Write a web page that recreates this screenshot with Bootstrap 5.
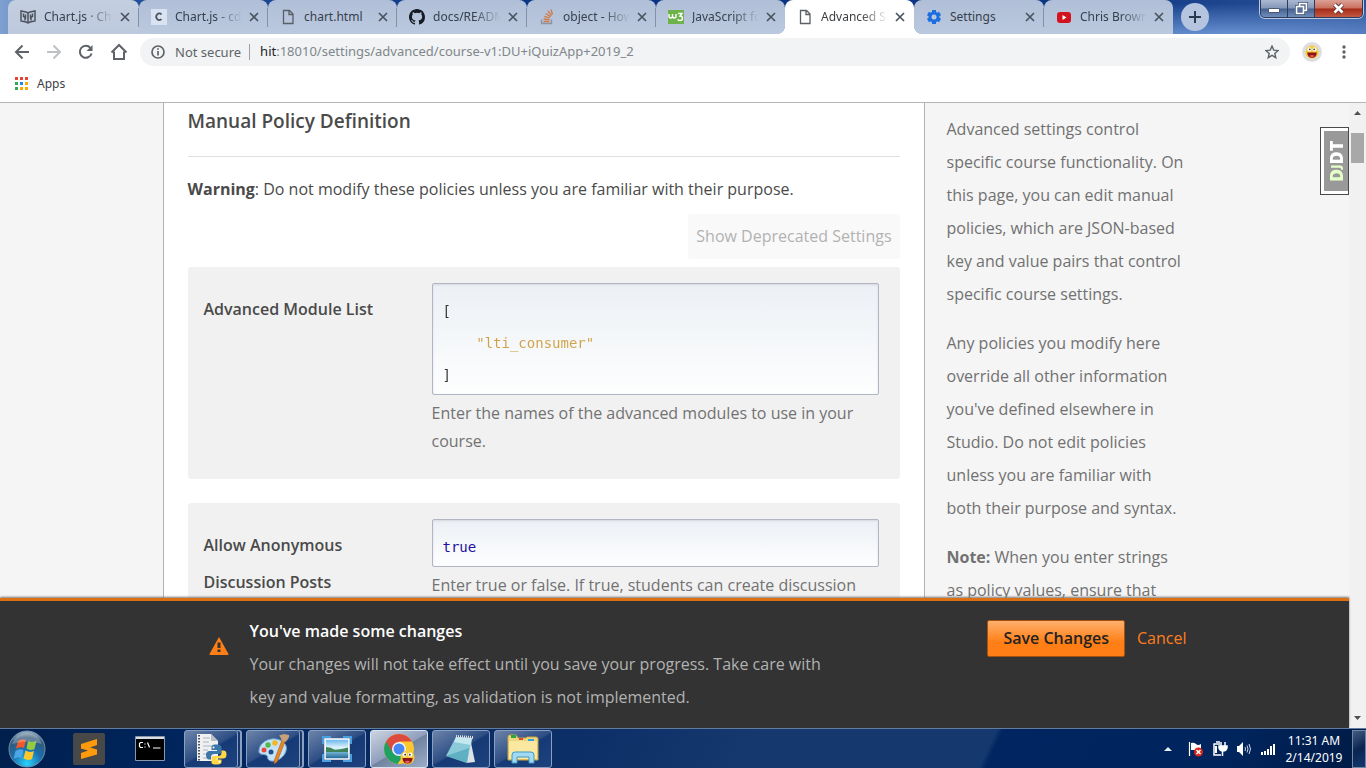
<!DOCTYPE html>
<html lang="en">
<head>
<meta charset="utf-8">
<meta name="viewport" content="width=device-width, initial-scale=1">
<title>Advanced Settings</title>
<link href="https://cdn.jsdelivr.net/npm/bootstrap@5.3.0/dist/css/bootstrap.min.css" rel="stylesheet">
<style>
body{font-family:"Open Sans",sans-serif;font-size:16px;color:#4a4a4a;background:#fff}
svg{display:block;flex:none}
button{font-family:inherit}
.plain{border:0;background:none;padding:0;color:inherit}
/* browser chrome */
.chrome-ui{font-family:"Noto Sans","Open Sans",sans-serif;font-size:12px}
.strip{height:34px;padding:0 3px 0 8px;background:radial-gradient(ellipse 380px 34px at 90% 110%,#6f98d8,transparent),linear-gradient(90deg,#7fa0d0 0,#23529c 8%,#0a3384 40%,#0a3380 75%,#123c86 82%,#2b5299 100%)}
.btab{flex:0 1 129px;min-width:0;height:34px;padding:0 9px 0 12px;background:linear-gradient(#b0bfd7,#bbc9df);border-radius:8px 8px 0 0;color:#37404d;position:relative}
.btab:nth-child(4n){flex-basis:130px}
.btab:first-child{background:linear-gradient(#c3cedf,#bdc9dd);flex-basis:131px}
.btab.sep::after{content:"";position:absolute;right:0;top:8px;width:1px;height:19px;background:#8390a6}
.btab.current{background:#fff;color:#3c4043;z-index:1}
.btab.current::before,.btab.current::after{content:"";position:absolute;bottom:0;width:8px;height:8px}
.btab.current::before{left:-8px;background:radial-gradient(circle at 0 0,transparent 8px,#fff 8px)}
.btab.current::after{right:-8px;background:radial-gradient(circle at 100% 0,transparent 8px,#fff 8px)}
.btab .name{white-space:nowrap;overflow:hidden;margin:0 7px 0 8px;-webkit-mask-image:linear-gradient(90deg,#000 60%,transparent);mask-image:linear-gradient(90deg,#000 60%,transparent)}
.btab .name.whole{-webkit-mask-image:none;mask-image:none}
.newtab{width:28px;height:28px;border-radius:50%;background:#b6c5df;margin:3px 0 0 8px}
.winctl{height:18px;border:1px solid #2b3c5c;border-top:0;border-radius:0 0 5px 5px;box-shadow:0 0 0 1px #b9c8e0;overflow:hidden}
.winctl button{width:27px;background:linear-gradient(#aab9d2,#8496b8 48%,#45608f 52%,#6f8dbb);border-right:1px solid #2b3c5c}
.winctl .shut{width:47px;border:0;background:linear-gradient(#dda096,#c8705f 48%,#a52a17 52%,#c35a43)}
.toolbar{height:36px;padding:0 14px;color:#5f6368}
.omni{height:28px;border-radius:14px;background:#f1f3f4;font-size:13px;padding:0 11px;margin:0 12px;gap:10px}
.omni .secure{padding-right:8px;border-right:1px solid #9aa0a6;line-height:16px}
.omni .addr{color:#80868b}
.profile{padding:3px;margin-right:14px;background:#dedede}
.marks{height:33px;padding:0 14px 5px;border-bottom:1px solid #b6b4b6;color:#3c4043}
/* page */
.viewport{background:#f5f5f5;min-height:0}
.scroller{min-height:0}
.wrap{max-width:1024px}
.sheet{background:#fff;border:solid #b2b2b2;border-width:0 1px;padding:0 24px}
.sheet h3{font-size:19px;line-height:36px;font-weight:600;border-bottom:1px solid #e0e0e0;margin:0 0 16px;padding-bottom:17px}
.warn{line-height:33px;margin:0 0 8px}
.dep{background:#f9f9f9;color:#b2b2b2;height:45px;padding:0 8px 2px;border-radius:2px}
.policy{background:#f1f1f1;border-radius:3px;padding:16px 21px 24px 16px;margin-bottom:24px}
.policy label{font-weight:600;line-height:37px;padding-top:8px;padding-right:16px;flex:0 0 228px}
.code{display:block;width:100%;border:1px solid #b2b6c4;border-radius:2px;padding:11px 10px 3px;font:14px/32px "DejaVu Sans Mono",monospace;resize:none;overflow:hidden;outline:0;box-shadow:inset 0 1px 2px #d6dadf;background:linear-gradient(#ecf0f5,#fdfefe);color:#2211a0}
.code.one{height:48px}
.code.list{height:112px;color:transparent;background:linear-gradient(#333 43px,#d0a145 43px,#d0a145 75px,#333 75px) text,linear-gradient(#ecf0f5,#fdfefe) padding-box}
.help{color:#727272;line-height:28px;padding-top:4px;margin:0}
.info{flex:0 0 262px;padding:10px 0 0 22px;line-height:33px;color:#717171}
.info p{margin:0 0 16px}
.djdt{position:absolute;right:0;top:24px;z-index:2;background:#fff;border:1px solid #4a4a4a;padding:3px 0 3px 3px;text-decoration:none}
.djdt span{display:block;writing-mode:vertical-rl;transform:rotate(180deg);background:#999;color:#fff;font-weight:800;font-size:18px;line-height:24px;height:60px;text-align:center}
.djdt i{font-style:normal;color:#e4ffc8}
.djdt small{font-size:12px}
.notice{background:#333;border-top:3px solid #dd7013;box-shadow:0 -1px 2px #777;position:relative;color:#b2b2b2;line-height:33px}
.notice .wrap{padding:14px 0 14px 46px}
.notice .alerticon{margin-top:22px}
.notice .msg{max-width:590px;margin-left:21px}
.notice h2{font-size:16px;line-height:33px;font-weight:600;color:#fff;margin:0}
.save{height:37px;border:1px solid #a3530f;border-radius:2px;background:linear-gradient(#ffb06e,#ff7f16 60%);color:#222;padding:0 15px;font-weight:600;margin-top:5px}
.cancel{color:#fd7e20;text-decoration:none;margin:5px 0 0 12px;line-height:37px}
.sbar{width:17px;background:#f1f1f1;padding:7px 2px}
.thumb{height:30px;background:#a8a8a8;margin-top:18px}
/* taskbar */
.task{height:40px;background:linear-gradient(115deg,#001f4c 0,#00245c 12%,#0b2f66 42%,#15396f 55%,#15396f 72%,#002560 72.5%,#00245c 90%,#001a44 100%);border-top:1px solid #627da2;font-family:"Noto Sans","Open Sans",sans-serif;font-size:12px;color:#fff;padding-left:8px}
.start{margin-right:27px}
.cmd{margin:0 19px 0 30px}
.tb{width:58px;height:38px;border:1px solid #8ba0c0;border-radius:3px;background:linear-gradient(150deg,#6d84aa,#2e4f85 48%,#163a75 52%,#1d427d);margin-right:4px}
.tb.multi{width:54px;margin-right:8px;box-shadow:3px 0 0 -1px #17376c,4px 0 0 0 #8ba0c0}
.tb.on{background:linear-gradient(150deg,#ccd4e2,#8f9fbd 50%,#71849f 52%,#9cacc8);border-color:#dbe3ee}
.clock{line-height:17px;text-align:center;width:76px}
.desk{width:14px;height:38px;border:1px solid #7186a5;background:linear-gradient(150deg,#425c82,#0a2550 50%,#13396f)}
</style>
</head>
<body class="vh-100 d-flex flex-column overflow-hidden">
<svg width="0" height="0" class="position-absolute" aria-hidden="true">
<defs>
<symbol id="x" viewBox="0 0 10 10"><path d="M1 1l8 8M9 1L1 9" stroke="#4b5361" stroke-width="1.7"/></symbol>
<symbol id="doc" viewBox="0 0 16 16"><path d="M3.5 1.5h6l3.500 3.500v9.500h-9.500zM9 1.500v4h4" fill="none" stroke="#5a5e65" stroke-width="1.3"/></symbol>
<symbol id="awe" viewBox="0 0 16 16"><circle cx="8" cy="8" r="7.500" fill="#f5cb3c"/><circle cx="5" cy="5" r="2.300" fill="#fff"/><circle cx="11" cy="5" r="2.300" fill="#fff"/><circle cx="5.500" cy="5" r=".9" fill="#222"/><circle cx="10.500" cy="5" r=".9" fill="#222"/><path d="M2.500 8.500h11q-.5 6-5.500 6t-5.500-6z" fill="#8c1515"/><path d="M5 12.500q3-2 6 0-3 2.500-6 0z" fill="#f05a6a"/></symbol>
</defs>
</svg>
<header class="chrome-ui flex-shrink-0">
<div class="strip d-flex">
<div class="btab sep d-flex align-items-center"><svg width="16" height="16" viewBox="0 0 16 16" fill="none" stroke="#4c535e" stroke-width="1.500"><path d="M1 2l5 1 2 1 2-1 5-1v10l-5 1-2 1-2-1-5-1zM8 4v10M3.500 4.500v3l2 1v-3M5 8.500v3M12.500 4.500v3l-2 1v-3M11 8.500v3"/></svg><span class="name flex-fill">Chart.js · Chart</span><button class="plain" aria-label="Close tab"><svg width="10" height="10"><use href="#x"/></svg></button></div>
<div class="btab sep d-flex align-items-center"><svg width="16" height="16" viewBox="0 0 16 16"><path fill="#d8e2f0" d="M0 0h16v16H0z"/><path d="M10.500 5.500A3 3.300 0 1 0 10.500 10" fill="none" stroke="#4c535e" stroke-width="1.700"/></svg><span class="name flex-fill">Chart.js - cdnjs</span><button class="plain" aria-label="Close tab"><svg width="10" height="10"><use href="#x"/></svg></button></div>
<div class="btab sep d-flex align-items-center"><svg width="16" height="16"><use href="#doc"/></svg><span class="name whole flex-fill">chart.html</span><button class="plain" aria-label="Close tab"><svg width="10" height="10"><use href="#x"/></svg></button></div>
<div class="btab sep d-flex align-items-center"><svg width="16" height="16" viewBox="0 0 16 16"><path fill="#161b26" d="M8 0C3.580 0 0 3.580 0 8c0 3.540 2.290 6.530 5.470 7.590.4.070.55-.17.55-.38v-1.490c-2.010.37-2.530-.49-2.690-.94-.09-.23-.48-.94-.82-1.130-.28-.15-.68-.52-.01-.53.63-.01 1.080.58 1.230.82.72 1.210 1.870.87 2.330.66.070-.52.28-.87.510-1.070-1.780-.2-3.640-.89-3.640-3.950 0-.87.31-1.590.82-2.150-.08-.2-.36-1.020.08-2.120 0 0 .67-.21 2.200.82a7.600 7.600 0 0 1 4 0c1.530-1.040 2.200-.82 2.200-.82.44 1.100.16 1.920.08 2.120.51.56.82 1.270.82 2.150 0 3.070-1.870 3.750-3.650 3.950.29.25.54.73.54 1.480v2.200c0 .21.15.46.55.38A8 8 0 0 0 16 8c0-4.420-3.580-8-8-8z"/></svg><span class="name flex-fill">docs/README</span><button class="plain" aria-label="Close tab"><svg width="10" height="10"><use href="#x"/></svg></button></div>
<div class="btab sep d-flex align-items-center"><svg width="16" height="16" viewBox="0 0 16 16" fill="none"><path d="M2.500 10.500v4h10v-4" stroke="#8c93a0" stroke-width="1.400"/><path d="M4.500 12.500h6M4.600 10l6 .7M5.200 7.300l5.700 1.700M6.700 4.500l5 3.300M9 2l3.500 4.700M12 .5l1.500 5" stroke="#d07845" stroke-width="1.300"/></svg><span class="name flex-fill">object - How to</span><button class="plain" aria-label="Close tab"><svg width="10" height="10"><use href="#x"/></svg></button></div>
<div class="btab d-flex align-items-center"><svg width="16" height="16" viewBox="0 0 16 16"><path fill="#6db34a" d="M0 1h16v14H0z"/><path d="M1 5v2q0 2 1.700 2t1.800-2V5v2q0 2 1.800 2T8 7V5M10 4.500h4L12 7q2.500 0 2.500 2.200T12 11.500q-1.500 0-2.500-1" fill="none" stroke="#fff" stroke-width="1.400"/></svg><span class="name flex-fill">JavaScript for</span><button class="plain" aria-label="Close tab"><svg width="10" height="10"><use href="#x"/></svg></button></div>
<div class="btab current d-flex align-items-center"><svg width="16" height="16"><use href="#doc"/></svg><span class="name flex-fill">Advanced Settings</span><button class="plain" aria-label="Close tab"><svg width="10" height="10"><use href="#x"/></svg></button></div>
<div class="btab sep d-flex align-items-center"><svg width="16" height="16" viewBox="0 0 16 16"><g fill="#1d6fe0"><circle cx="8" cy="8" r="5.500"/><path d="M6 1h4v14H6z"/><path d="M6 1h4v14H6z" transform="rotate(60 8 8)"/><path d="M6 1h4v14H6z" transform="rotate(120 8 8)"/></g><circle cx="8" cy="8" r="2.500" fill="#b8c6dc"/></svg><span class="name whole flex-fill">Settings</span><button class="plain" aria-label="Close tab"><svg width="10" height="10"><use href="#x"/></svg></button></div>
<div class="btab d-flex align-items-center"><svg width="16" height="16" viewBox="0 0 16 16"><rect x="1" y="3" width="14" height="11" rx="3" fill="#d3121d"/><path d="M6.500 6v5l4-2.500z" fill="#fff"/></svg><span class="name flex-fill">Chris Brown</span><button class="plain" aria-label="Close tab"><svg width="10" height="10"><use href="#x"/></svg></button></div>
<button class="plain newtab d-flex align-items-center justify-content-center flex-shrink-0" aria-label="New tab"><svg width="12" height="12"><path d="M6 0v12M0 6h12" stroke="#2d3a4d" stroke-width="2"/></svg></button>
<div class="winctl d-flex ms-auto flex-shrink-0">
<button class="plain d-flex align-items-center justify-content-center" aria-label="Minimize"><svg width="12" height="8"><path d="M.5 3.500h11v4H.5z" fill="#fff" stroke="#4c5a72"/></svg></button>
<button class="plain d-flex align-items-center justify-content-center" aria-label="Restore"><svg width="13" height="13"><path d="M4.500 1.500h7v7h-7zM1.500 4.500h7v7h-7z" fill="none" stroke="#3c4a66" stroke-width="3"/><path d="M4.500 1.500h7v7h-3v3h-7v-7h3z" fill="#5a7098" stroke="#fff" stroke-width="1.600"/><path d="M4.500 4.500h4v4" fill="none" stroke="#fff" stroke-width="1.500"/></svg></button>
<button class="plain shut d-flex align-items-center justify-content-center" aria-label="Close"><svg width="13" height="11"><path d="M2.500 1.500l8 8M10.500 1.500l-8 8" stroke="#63312f" stroke-width="4.500"/><path d="M2.500 1.500l8 8M10.500 1.500l-8 8" stroke="#fff" stroke-width="2.700"/></svg></button>
</div>
</div>
<div class="toolbar d-flex align-items-center">
<button class="plain" aria-label="Back"><svg width="16" height="16" fill="none" stroke="#5f6368" stroke-width="2"><path d="M15 8H2M8.500 1.500L2 8l6.500 6.500"/></svg></button>
<button class="plain ms-3" aria-label="Forward"><svg width="16" height="16" fill="none" stroke="#bdc1c6" stroke-width="2"><path d="M1 8h13M7.500 1.500L14 8l-6.500 6.500"/></svg></button>
<button class="plain ms-3" aria-label="Reload"><svg width="16" height="16" fill="none"><path d="M13.600 9.500a6 6 0 1 1-1.200-5.700" stroke="#5f6368" stroke-width="2"/><path d="M14.500 1v6h-6z" fill="#5f6368"/></svg></button>
<button class="plain ms-3" aria-label="Home"><svg width="18" height="18" viewBox="0 0 18 18" fill="none" stroke="#5f6368" stroke-width="2"><path d="M1.500 9.500L9 2l7.500 7.500M4 8.500V16h10V8.500"/></svg></button>
<div class="omni d-flex align-items-center flex-fill">
<svg width="14" height="14" fill="none" stroke="#5f6368" stroke-width="1.700"><circle cx="7" cy="7" r="6"/><path d="M7 6v4.500M7 3.300v1.500"/></svg>
<span class="secure">Not secure</span>
<div class="addr flex-fill"><span class="text-dark">hit</span>:18010/settings/advanced/course-v1:DU+iQuizApp+2019_2</div>
<button class="plain" aria-label="Bookmark"><svg width="14" height="14" viewBox="0 0 14 14"><path d="M7 1l1.700 4.100 4.400.4-3.300 2.900 1 4.300L7 10.400l-3.800 2.300 1-4.300L.9 5.500l4.400-.4z" fill="none" stroke="#5f6368" stroke-width="1.400"/></svg></button>
</div>
<button class="plain profile rounded-circle" aria-label="Profile"><svg width="14" height="14"><use href="#awe"/></svg></button>
<button class="plain mx-1" aria-label="Menu"><svg width="8" height="14" fill="#5f6368"><circle cx="4" cy="2" r="1.700"/><circle cx="4" cy="7" r="1.700"/><circle cx="4" cy="12" r="1.700"/></svg></button>
</div>
<div class="marks d-flex align-items-center">
<a href="#" class="d-flex align-items-center text-reset text-decoration-none"><svg width="15" height="15"><path d="M1 1h3v3H1zM6 1h3v3H6zM11 1h3v3h-3z" fill="#ea4335"/><path d="M1 6h3v3H1zM1 11h3v3H1z" fill="#34a853"/><path d="M6 6h3v3H6z" fill="#1a86f0"/><path d="M11 6h3v3h-3zM6 11h3v3H6zM11 11h3v3h-3z" fill="#f9ab00"/></svg><span class="ms-2">Apps</span></a>
</div>
</header>
<div class="viewport d-flex flex-fill">
<div class="d-flex flex-column flex-fill position-relative">
<div class="scroller flex-fill overflow-hidden">
<div class="wrap mx-auto d-flex h-100">
<main class="sheet flex-fill">
<h3>Manual Policy Definition</h3>
<p class="warn"><strong>Warning</strong>: Do not modify these policies unless you are familiar with their purpose.</p>
<div class="d-flex justify-content-end mb-2"><button class="plain dep">Show Deprecated Settings</button></div>
<div class="policy d-flex">
<label for="modules">Advanced Module List</label>
<div class="flex-fill"><textarea id="modules" class="code list" spellcheck="false">[
    "lti_consumer"
]</textarea><p class="help">Enter the names of the advanced modules to use in your course.</p></div>
</div>
<div class="policy d-flex">
<label for="anon">Allow Anonymous Discussion Posts</label>
<div class="flex-fill"><input id="anon" class="code one" value="true"><p class="help">Enter true or false. If true, students can create discussion</p></div>
</div>
</main>
<aside class="info">
<p>Advanced settings control specific course functionality. On this page, you can edit manual policies, which are JSON-based key and value pairs that control specific course settings.</p>
<p>Any policies you modify here override all other information you've defined elsewhere in Studio. Do not edit policies unless you are familiar with both their purpose and syntax.</p>
<p><strong>Note:</strong> When you enter strings as policy values, ensure that</p>
</aside>
</div>
</div>
<a href="#" class="djdt"><span><i>D<small>J</small></i>DT</span></a>
<section class="notice flex-shrink-0">
<div class="wrap mx-auto d-flex align-items-start">
<svg width="20" height="18" viewBox="0 0 20 18" class="alerticon"><path d="M10 0l9.500 17q.3 1-.8 1H1.300Q.2 18 .5 17z" fill="#ff7f16"/><path d="M8.500 5.500h3v5.500h-3zM8.500 12.500h3v2.500h-3z" fill="#333"/></svg>
<div class="msg"><h2>You've made some changes</h2><p class="m-0">Your changes will not take effect until you save your progress. Take care with key and value formatting, as validation is not implemented.</p></div>
<button class="save ms-auto">Save Changes</button><a href="#" class="cancel">Cancel</a>
</div>
</section>
</div>
<div class="sbar d-flex flex-column flex-shrink-0">
<svg class="mx-auto" width="9" height="5"><path d="M1 5l3.500-4L8 5z" fill="#505050"/></svg>
<div class="thumb"></div>
<svg class="mx-auto mt-auto" width="9" height="5"><path d="M1 0l3.500 4L8 0z" fill="#505050"/></svg>
</div>
</div>
<footer class="task d-flex align-items-center flex-shrink-0">
<button class="plain start" aria-label="Start"><svg width="38" height="38" viewBox="0 0 38 38"><defs><radialGradient id="orb" cx=".5" cy=".9" r=".9"><stop offset="0" stop-color="#28d3fa"/><stop offset=".45" stop-color="#1a6fae"/><stop offset=".8" stop-color="#345877"/><stop offset="1" stop-color="#a6bccb"/></radialGradient></defs><circle cx="19" cy="19" r="18" fill="url(#orb)" stroke="#6d8fae"/><path d="M10 11q4-3 8-1l-2 8q-4-2-8 1z" fill="#f0582a"/><path d="M20 11q4 2 8.500 0l-2 8q-4 2-8-.5z" fill="#95cb3e"/><path d="M7.500 21q4-3 8-1l-2 8q-4-2-8 1z" fill="#4ba6e6"/><path d="M17.500 20.500q4 2.500 8.500.5l-2 8q-4 2-8.500-.5z" fill="#fdc72e"/><path d="M4 14Q8 3 19 3t15 11q-14-5-30 0z" fill="#fff" opacity=".25"/></svg></button>
<button class="plain" aria-label="Sublime Text"><svg width="32" height="32" viewBox="0 0 32 32"><rect width="32" height="32" rx="2" fill="#484848"/><path d="M8 11l16-5v6l-7 2.500 7 2v5L8 26v-6l7-2.500-7-2z" fill="#ff9a0c"/></svg></button>
<button class="plain cmd" aria-label="Command Prompt"><svg width="30" height="25" viewBox="0 0 30 25"><path d="M.5.5h29v24H.5z" fill="#000" stroke="#8a97a8"/><path d="M1 1h28v2H1z" fill="#d9dee6"/><path d="M8 6.500H5.500L4.500 7.500v3l1 1H8M10 7.500v1M10 10.500v1M12.500 6.500l2 5M18 12h7.500" stroke="#fff" stroke-width="1.200" fill="none"/></svg></button>
<button class="plain tb multi d-flex align-items-center justify-content-center" aria-label="Python file"><svg width="32" height="32" viewBox="0 0 32 32"><path d="M2 1h14l7 7v20H2z" fill="#eef0f2"/><path d="M16 1l7 7h-7z" fill="#b9bec5"/><path d="M4 2v26" stroke="#555" stroke-width="2" stroke-dasharray="1.500 1.500"/><path d="M8 5h7M8 9h6M8 13h11M8 17h5M8 21h4M8 25h4" stroke="#b0b4ba"/><path d="M21 11.500c-4 0-4.500 1.500-4.500 3V17H22v1h-7.500c-2 0-3.500 1.500-3.500 4s1.300 4.500 3 4.500h2v-2.500c0-2 1.500-3 3-3h5c1.500 0 2.500-1.200 2.500-2.500v-4c0-2-1.500-3-5.500-3z" fill="#3a76a8"/><path d="M22 31.500c4 0 4.500-1.500 4.500-3V26.500H21v-1h7c2.500 0 3.500-1.500 3.500-4s-1-4-3-4h-2v2.500c0 2-1.500 3-3 3h-4.500c-1.500 0-2.500 1-2.500 2.500v3.500c0 2 1.500 2.500 5.500 2.500z" fill="#ffd845"/><circle cx="18.500" cy="14.500" r="1" fill="#fff"/><circle cx="24.500" cy="28.800" r="1" fill="#fff"/></svg></button>
<button class="plain tb multi d-flex align-items-center justify-content-center" aria-label="Paint"><svg width="34" height="32" viewBox="0 0 34 32"><path d="M3 17C4 9 13 5 20 6s12 6 10 12-8 11-15 10c-5-1-2-5-5-6S2 22 3 17z" fill="#c4e3f7" stroke="#6aa2cf"/><circle cx="8" cy="17" r="2.500" fill="#e84a39"/><circle cx="12" cy="12" r="2.700" fill="#54b848"/><circle cx="19" cy="10" r="2.800" fill="#f4b72a"/><circle cx="15" cy="19" r="2.500" fill="#1f4f8c"/><path d="M26 7l3 1.500-8 20.500-3 2 .5-4z" fill="#e88726" stroke="#a85613" stroke-width=".6"/><path d="M25.500 7.500q-.5-3-2.500-5l5-1.500 5 1q1 2-3.500 7z" fill="#c7a07a"/></svg></button>
<button class="plain tb d-flex align-items-center justify-content-center" aria-label="Picture viewer"><svg width="30" height="26" viewBox="0 0 30 26"><defs><linearGradient id="sky" x2="0" y2="1"><stop offset="0" stop-color="#62b2ec"/><stop offset=".45" stop-color="#e4f6fb"/><stop offset=".6" stop-color="#7fc0de"/><stop offset="1" stop-color="#1d5f90"/></linearGradient></defs><path d="M1 8V1h8M21 1h8v7M29 18v7h-8M9 25H1v-7" fill="none" stroke="#4a9fe0" stroke-width="2"/><path d="M3 3h24v20H3z" fill="url(#sky)" stroke="#fff" stroke-width="1.500"/><path d="M4 11q5 0 9 3 7-1 13-2.500V16H4z" fill="#3f8258"/></svg></button>
<button class="plain tb on d-flex align-items-center justify-content-center" aria-label="Chrome"><svg width="32" height="32" viewBox="0 0 32 32"><circle cx="16" cy="16" r="15" fill="#fcc72f"/><path d="M3 8.500a15 15 0 0 0 11.500 22.400L22 20l-6-4z" fill="#1ea163"/><path d="M16 8.500h13A15 15 0 0 0 3 8.500l6 10z" fill="#dd4b3e"/><circle cx="16" cy="16" r="7" fill="#f4f6f8"/><circle cx="16" cy="16" r="5.500" fill="#4788f4"/><svg x="17" y="17" width="15" height="15"><use href="#awe"/></svg></svg></button>
<button class="plain tb d-flex align-items-center justify-content-center" aria-label="Notepad"><svg width="32" height="30" viewBox="0 0 32 30"><path d="M25 4l5 24-9 1z" fill="#dce3e6"/><path d="M11 3l16 1-5 25L1 22z" fill="#8bcbd9"/><path d="M11 3l16 1-1 7-17-3z" fill="#c3e8ee"/><path d="M1 22l23-8-2 15z" fill="#459fb5" opacity=".6"/><path d="M11 2.500l17 1" stroke="#ddd" stroke-width="3" stroke-dasharray="1 1"/></svg></button>
<button class="plain tb d-flex align-items-center justify-content-center" aria-label="Explorer"><svg width="34" height="32" viewBox="0 0 34 32"><path d="M2 27V4q0-2 2-2h6l2 3h8l1-1h9q2 0 2 2v21z" fill="#efd77d" stroke="#c8a545"/><path d="M3 8h28v18H3z" fill="#fae7a0"/><path d="M5 2h5v3H5z" fill="#27a844"/><path d="M13 5h4v2h-4z" fill="#df4b35"/><path d="M22 6h6v2h-6z" fill="#36a3df"/><path d="M6 30V22q0-3 3-3h16q3 0 3 3v8h-5v-6H11v6z" fill="#a3daf2" stroke="#3b9bc8"/></svg></button>
<div class="ms-auto d-flex align-items-center">
<svg width="8" height="5"><path d="M0 5l4-4 4 4z" fill="#e8edf5"/></svg>
<svg class="ms-3" width="16" height="16" viewBox="0 0 16 16"><path d="M1.500 1v14" stroke="#fff" stroke-width="1.200"/><path d="M3 2q3-1 5 1t5 0v6H3z" fill="#fff"/><circle cx="10.500" cy="11" r="4.500" fill="#d8281c"/><path d="M8.500 9l4 4M12.500 9l-4 4" stroke="#fff" stroke-width="1.500"/></svg>
<svg class="ms-2" width="16" height="16" viewBox="0 0 16 16" fill="none" stroke="#fff" stroke-width="1.500"><path d="M8 3H2v11h7M4 1h4"/><path d="M9 1v4M13 1v4M10.500 10v5"/><path d="M7 5h8v2q-1 3-4 3T7 7z" fill="#fff"/><path d="M4 5v7" stroke-width="2"/></svg>
<svg class="ms-2" width="16" height="16" viewBox="0 0 16 16"><path d="M1 5h2l4-4v14l-4-4H1z" fill="#fff"/><path d="M9 6q1 2 0 4M11 4.500q2 3.500 0 7M13 3q3 5 0 10" fill="none" stroke="#cfd9e8"/></svg>
<svg class="ms-2" width="16" height="16" viewBox="0 0 16 16" fill="#fff"><path d="M1 11h2v3H1zM4 10h2v4H4zM7 8h2v6H7zM10 5h2v9h-2zM13 3h2v11h-2z"/></svg>
<div class="clock">11:31 AM<br>2/14/2019</div>
<button class="plain desk" aria-label="Show desktop"></button>
</div>
</footer>
<script src="https://cdn.jsdelivr.net/npm/bootstrap@5.3.0/dist/js/bootstrap.bundle.min.js"></script>
</body>
</html>
